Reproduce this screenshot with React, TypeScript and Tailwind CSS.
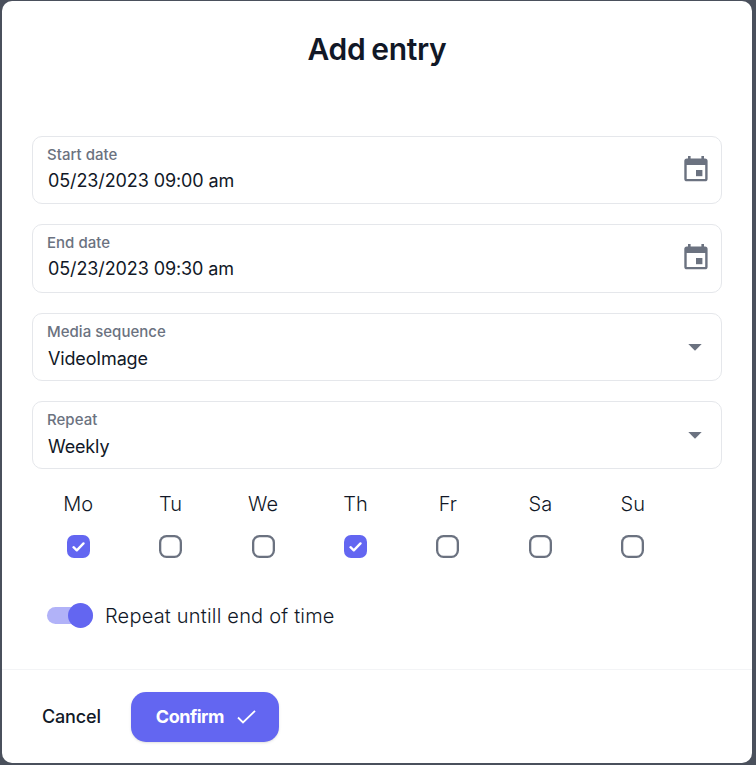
import React from "react";

const days = [
  { name: "Mo", on: true },
  { name: "Tu", on: false },
  { name: "We", on: false },
  { name: "Th", on: true },
  { name: "Fr", on: false },
  { name: "Sa", on: false },
  { name: "Su", on: false },
];

function CalendarIcon() {
  return (
    <svg width="24" height="26" viewBox="0 0 24 26" fill="#6b7280" className="mt-[-2px] mr-[13px] shrink-0">
      <path
        fillRule="evenodd"
        d="M4 0h2.6v2.5h10.8V0H20v2.5h1A2.6 2.6 0 0 1 23.6 5.1v17.6a2.6 2.6 0 0 1-2.6 2.6H2.9A2.6 2.6 0 0 1 .3 22.7V5.1a2.6 2.6 0 0 1 2.6-2.6H4zM2.7 9v13.9h18.5V9z"
      />
      <path d="M12 14h6.4v6.2H12z" />
    </svg>
  );
}

function Caret() {
  return (
    <svg width="14" height="7" viewBox="0 0 14 7" fill="#6b7280" className="mt-px mr-[19px] shrink-0">
      <path d="M.3 0h13.4L7 6.7z" />
    </svg>
  );
}

function Field({ label, value, select }: { label: string; value: string; select?: boolean }) {
  return (
    <div className="flex h-[68.3px] items-start justify-between rounded-[10px] border border-[#e5e7eb] bg-white pl-[14px]">
      <div className={select ? "flex flex-col pt-[8.5px]" : "flex flex-col pt-[7.5px]"}>
        <span className="text-[15px] leading-5 font-[450] tracking-[0.02px] text-[#6b7280]">{label}</span>
        <span
          className={
            select
              ? "mt-[4px] pl-px text-[18px] leading-[26px] tracking-[-0.15px] text-[#111827]"
              : "mt-[3px] pl-px text-[18px] leading-[26px] tracking-[-0.11px] text-[#111827]"
          }
        >
          {value}
        </span>
      </div>
      <div className="flex items-center self-stretch">{select ? <Caret /> : <CalendarIcon />}</div>
    </div>
  );
}

export default function App() {
  return (
    <div className="h-[765px] w-[756px] bg-[#4a505c] pt-px pl-0.5 font-['Inter',sans-serif]">
      <div className="flex h-[762px] w-[750px] flex-col rounded-[10px] bg-white">
        <h1 className="mt-7 text-center text-[30px] leading-10 font-semibold tracking-[-0.3px] text-[#111827] [word-spacing:-1.5px]">
          Add entry
        </h1>
        <div className="mx-[30px] mt-[67px] flex flex-col gap-5">
          <Field label="Start date" value="05/23/2023 09:00 am" />
          <Field label="End date" value="05/23/2023 09:30 am" />
          <Field label="Media sequence" value="VideoImage" select />
          <Field label="Repeat" value="Weekly" select />
        </div>
        <div className="mt-[21px] ml-[30px] grid w-[647px] grid-cols-7">
          {days.map((d) => (
            <div key={d.name} className="flex flex-col items-center">
              <span className="text-[20px] leading-7 font-light tracking-[0.1px] text-[#111827]">{d.name}</span>
              {d.on ? (
                <span className="mt-[17px] flex size-[23px] items-center justify-center rounded-[7px] bg-[#6366f1]">
                  <svg width="13" height="10" viewBox="0 0 13 10" fill="none" stroke="white" strokeWidth="2.3" strokeLinecap="round" strokeLinejoin="round">
                    <path d="M1.5 5.2l3.3 3.2 6.7-7" />
                  </svg>
                </span>
              ) : (
                <span className="mt-[17px] size-[23px] rounded-[7.5px] shadow-[inset_0_0_0_2.3px_#6b7280]" />
              )}
            </div>
          ))}
        </div>
        <div className="mt-[43px] ml-[45px] flex items-center">
          <div className="flex h-[17px] w-[46px] items-center justify-end rounded-full bg-[#b1b2f8]">
            <div className="size-[25px] shrink-0 rounded-full bg-[#6366f1]" />
          </div>
          <span className="mt-px ml-3 text-[20px] leading-7 font-light tracking-[0.2px] text-[#111827]">
            Repeat untill end of time
          </span>
        </div>
        <div className="mt-auto flex h-[94px] items-start border-t border-[#f3f4f6] pt-[22px] pl-10">
          <button className="h-[49px] text-[18px] font-medium tracking-[-0.15px] text-[#111827]">Cancel</button>
          <div className="grow-0 basis-[30px]" />
          <button className="flex h-[50px] w-[148px] items-center rounded-[15px] bg-[#6366f1] pl-[25px] text-[18px] font-bold text-white shadow-sm">
            <span className="-mt-0.5 tracking-[-0.5px]">Confirm</span>
            <svg width="19" height="14" viewBox="0 0 19 14" fill="none" stroke="white" strokeWidth="1.8" className="ml-[13px]">
              <path d="M1 7.5l5 5L18 .8" />
            </svg>
          </button>
        </div>
      </div>
    </div>
  );
}
